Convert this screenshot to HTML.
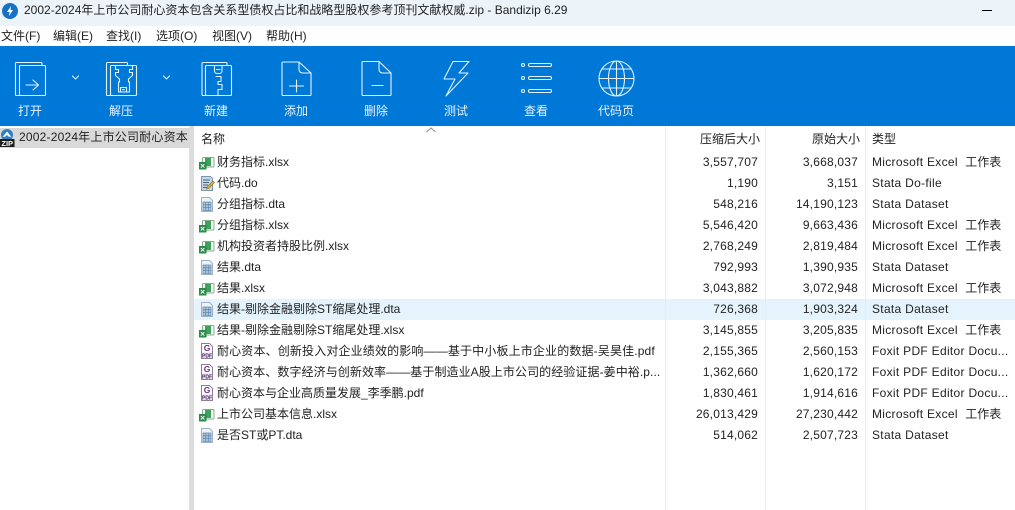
<!DOCTYPE html>
<html lang="zh"><head><meta charset="utf-8"><title>Bandizip</title>
<style>
html,body{margin:0;padding:0;width:1015px;height:510px;overflow:hidden;background:#fff}
body{font-family:"Liberation Sans","Noto Sans CJK SC",sans-serif;font-size:12px;color:#222;position:relative}
div{position:absolute;white-space:nowrap}
.t{line-height:20px;height:20px;margin-top:-1px}
.lbl{top:102px;width:60px;text-align:center;color:#e8f3fc;font-size:12px;line-height:18px}
.m{top:26px;line-height:20px;font-size:12px}
.r{text-align:right}
.n{text-align:right;width:100px;letter-spacing:.2px;line-height:20px;height:20px;margin-top:-1px}
.a{left:658px}.b{left:758px}
.y{left:872px;letter-spacing:.3px;line-height:20px;height:20px;margin-top:-1px}
.y span{letter-spacing:0;margin-left:4px}
.f{left:217px;line-height:20px;height:20px;margin-top:-1px}
svg{position:absolute;overflow:visible}
.ic{fill:none;stroke:#e4f2fc;stroke-width:1.1;stroke-linejoin:round;stroke-linecap:round}
</style></head><body>
<svg width="0" height="0" style="position:absolute"><defs>
<g id="x"><rect x="3.500" y="3.500" width="11.500" height="9.500" rx="1" fill="#f7faf7" stroke="#8aa893"/><rect x="6" y="4" width="6" height="8" fill="#3ca35a"/><rect x="0" y="8" width="7.500" height="7.500" fill="#2a8a47"/><path d="M1.800 10l3.600 3.600M5.400 10l-3.600 3.600" stroke="#fff" stroke-width=".9"/></g>
<g id="d"><path d="M2.500 1.500h8l3 3v11h-11z" fill="#eef3f8" stroke="#9db2c6"/><path d="M4 6h8v8.500H4zM4 8.800h8M4 11.600h8M6.700 6v8.500M9.300 6v8.500" fill="#b4cadf" stroke="#5f86ad" stroke-width=".8"/></g>
<g id="p"><path d="M2.500 .5h8l3 3v12h-11z" fill="#fff" stroke="#8d7f95"/><text x="8" y="8" font-size="8.500" text-anchor="middle" fill="#6f2f86" font-weight="bold" font-family="Liberation Sans">G</text><rect x="3" y="9.500" width="10" height="5.500" fill="#e7deec"/><text x="8" y="14.300" font-size="5" text-anchor="middle" fill="#4d2d60" font-weight="bold" font-family="Liberation Sans">PDF</text></g>
<g id="do"><path d="M2.500 1.500h9l2 2v12h-11z" fill="#c9d8e6" stroke="#7f95ab"/><path d="M4 5h7M4 7.500h6M4 10h5M4 12.500h4" stroke="#47637f"/><path d="M8 12l6-6 1.500 1.500-6 6-2 .5z" fill="#d9b23c" stroke="#8a6d1d" stroke-width=".6"/></g>
</defs></svg>

<!-- Title bar -->
<div style="left:0;top:0;width:1015px;height:26px;background:#ecf3f9"></div>
<svg style="left:2px;top:3px" width="16" height="16"><circle cx="8" cy="8" r="8" fill="#1672c4"/><path d="M9 3L5 9h2.500L7 13l4-6H8.500z" fill="#fff"/></svg>
<div class="t" style="left:24px;top:1px;font-size:12px">2002-2024年上市公司耐心资本包含关系型债权占比和战略型股权参考顶刊文献权威.zip - Bandizip 6.29</div>
<div style="left:982px;top:10px;width:10px;height:1px;background:#000"></div>

<!-- Menu -->
<div style="left:0;top:26px;width:1015px;height:20px;background:#fff"></div>
<div class="m" style="left:1px">文件(F)</div>
<div class="m" style="left:53px">编辑(E)</div>
<div class="m" style="left:106px">查找(I)</div>
<div class="m" style="left:156px">选项(O)</div>
<div class="m" style="left:212px">视图(V)</div>
<div class="m" style="left:266px">帮助(H)</div>

<!-- Toolbar -->
<div style="left:0;top:46px;width:1015px;height:80px;background:#0078d7"></div>
<svg class="ic" style="left:0;top:46px" width="1015" height="80">
 <!-- open -->
 <path d="M19 49.500h-2.500a1 1 0 0 1-1-1V17.500a1 1 0 0 1 1-1H41a1 1 0 0 1 1 1v2"/>
 <rect x="19.500" y="19.500" width="26" height="30" rx="1"/>
 <path d="M26 39h12.500M33 34l5.500 5-5.500 5"/>
 <path d="M72.500 30l3 3 3-3"/>
 <!-- extract -->
 <path d="M110 49.500h-2.500a1 1 0 0 1-1-1V17.500a1 1 0 0 1 1-1h19a1 1 0 0 1 1 1v2"/>
 <rect x="110.500" y="19.500" width="26" height="30" rx="1"/>
 <path d="M115.500 19.500v4h3v3h-3v3l4 3.500v3h-1v10h11v-10h-1v-3l4-3.500v-3h-3v-3h3v-4"/>
 <rect x="120.500" y="41.500" width="6" height="4.500"/><path d="M122.500 43.700h2"/>
 <path d="M163.500 30l3 3 3-3"/>
 <!-- new -->
 <path d="M205 49.500h-2a1 1 0 0 1-1-1V17.500a1 1 0 0 1 1-1h23a1 1 0 0 1 1 1v2"/>
 <rect x="205.500" y="19.500" width="26" height="30" rx="1"/>
 <path d="M214.500 19.500v6a3 3 0 0 0 3 2h1.500a3 3 0 0 0 3-2v-6M216.500 23.500h3.500"/>
 <path d="M216 30.500h5v5h-3v3h4v5h-4v6"/>
 <!-- add -->
 <path d="M299 16h-16a1 1 0 0 0-1 1V48.500a1 1 0 0 0 1 1h27a1 1 0 0 0 1-1V27zM299 16v7q0 4 4 4h8"/>
 <path d="M296.500 34v12M289.500 40h14"/>
 <!-- delete -->
 <path d="M379 15.500h-16a1 1 0 0 0-1 1V48.500a1 1 0 0 0 1 1h27a1 1 0 0 0 1-1V27zM379 15.500v7.500q0 4 4 4h8"/>
 <path d="M372 39.500h11"/>
 <!-- test -->
 <path d="M453 15.500h16l-10 11.500h9L446 50l9-17h-11z"/>
 <!-- view -->
 <circle cx="523" cy="19" r="1.500"/><circle cx="523" cy="32" r="1.500"/><circle cx="523" cy="45" r="1.500"/>
 <rect x="528.500" y="17.500" width="23" height="3" rx="1.500"/><rect x="528.500" y="30.500" width="23" height="3" rx="1.500"/><rect x="528.500" y="43.500" width="23" height="3" rx="1.500"/>
 <!-- globe -->
 <circle cx="616.500" cy="32.500" r="17.500"/><ellipse cx="616.500" cy="32.500" rx="8" ry="17.500"/>
 <path d="M616.500 15v35M599 32.500h35M602 23h29M602 42h29"/>
</svg>
<div class="lbl" style="left:0">打开</div>
<div class="lbl" style="left:91px">解压</div>
<div class="lbl" style="left:186px">新建</div>
<div class="lbl" style="left:266px">添加</div>
<div class="lbl" style="left:346px">删除</div>
<div class="lbl" style="left:426px">测试</div>
<div class="lbl" style="left:506px">查看</div>
<div class="lbl" style="left:586px">代码页</div>

<!-- Left tree -->
<div style="left:0;top:128px;width:189px;height:20px;background:#d9d9d9"></div>
<svg style="left:0;top:129px" width="16" height="20"><circle cx="7" cy="6" r="6" fill="#2b7fc6"/><path d="M2.500 8L7 2.500 11.500 8 8.500 7.500 7 6 5.500 7.500z" fill="#fff"/><rect x="0" y="10" width="14.500" height="8" fill="#1d1d1d"/><text x="7.200" y="17" font-size="7.500" font-weight="bold" text-anchor="middle" fill="#fff" font-family="Liberation Sans">ZIP</text></svg>
<div class="t" style="left:19px;top:128px;font-size:12px;letter-spacing:.2px">2002-2024年上市公司耐心资本</div>
<div style="left:189px;top:126px;width:5px;height:384px;background:#dcdcdc"></div>

<!-- Selected row -->
<div style="left:194px;top:299px;width:821px;height:21px;background:#e5f3fd"></div>

<!-- Column separators -->
<div style="left:665px;top:126px;width:1px;height:384px;background:#e8edf2"></div>
<div style="left:765px;top:126px;width:1px;height:384px;background:#e8edf2"></div>
<div style="left:865px;top:126px;width:1px;height:384px;background:#e8edf2"></div>

<!-- Header -->
<div class="t" style="left:201px;top:130px">名称</div>
<svg style="left:426px;top:127px" width="10" height="6"><path d="M.5 5L5 1l4.500 4" fill="none" stroke="#8c8c8c"/></svg>
<div class="t r" style="left:660px;width:100px;top:130px">压缩后大小</div>
<div class="t r" style="left:760px;width:100px;top:130px">原始大小</div>
<div class="t" style="left:872px;top:130px">类型</div>

<!-- Rows -->
<svg style="left:199px;top:154px" width="16" height="16"><use href="#x"/></svg>
<div class="f" style="top:153px">财务指标.xlsx</div><div class="n a" style="top:153px">3,557,707</div><div class="n b" style="top:153px">3,668,037</div><div class="y" style="top:153px">Microsoft Excel<span> 工作表</span></div>

<svg style="left:199px;top:175px" width="16" height="16"><use href="#do"/></svg>
<div class="f" style="top:174px">代码.do</div><div class="n a" style="top:174px">1,190</div><div class="n b" style="top:174px">3,151</div><div class="y" style="top:174px">Stata Do-file</div>

<svg style="left:199px;top:196px" width="16" height="16"><use href="#d"/></svg>
<div class="f" style="top:195px">分组指标.dta</div><div class="n a" style="top:195px">548,216</div><div class="n b" style="top:195px">14,190,123</div><div class="y" style="top:195px">Stata Dataset</div>

<svg style="left:199px;top:217px" width="16" height="16"><use href="#x"/></svg>
<div class="f" style="top:216px">分组指标.xlsx</div><div class="n a" style="top:216px">5,546,420</div><div class="n b" style="top:216px">9,663,436</div><div class="y" style="top:216px">Microsoft Excel<span> 工作表</span></div>

<svg style="left:199px;top:238px" width="16" height="16"><use href="#x"/></svg>
<div class="f" style="top:237px">机构投资者持股比例.xlsx</div><div class="n a" style="top:237px">2,768,249</div><div class="n b" style="top:237px">2,819,484</div><div class="y" style="top:237px">Microsoft Excel<span> 工作表</span></div>

<svg style="left:199px;top:259px" width="16" height="16"><use href="#d"/></svg>
<div class="f" style="top:258px">结果.dta</div><div class="n a" style="top:258px">792,993</div><div class="n b" style="top:258px">1,390,935</div><div class="y" style="top:258px">Stata Dataset</div>

<svg style="left:199px;top:280px" width="16" height="16"><use href="#x"/></svg>
<div class="f" style="top:279px">结果.xlsx</div><div class="n a" style="top:279px">3,043,882</div><div class="n b" style="top:279px">3,072,948</div><div class="y" style="top:279px">Microsoft Excel<span> 工作表</span></div>

<svg style="left:199px;top:301px" width="16" height="16"><use href="#d"/></svg>
<div class="f" style="top:300px">结果-剔除金融剔除ST缩尾处理.dta</div><div class="n a" style="top:300px">726,368</div><div class="n b" style="top:300px">1,903,324</div><div class="y" style="top:300px">Stata Dataset</div>

<svg style="left:199px;top:322px" width="16" height="16"><use href="#x"/></svg>
<div class="f" style="top:321px">结果-剔除金融剔除ST缩尾处理.xlsx</div><div class="n a" style="top:321px">3,145,855</div><div class="n b" style="top:321px">3,205,835</div><div class="y" style="top:321px">Microsoft Excel<span> 工作表</span></div>

<svg style="left:199px;top:343px" width="16" height="16"><use href="#p"/></svg>
<div class="f" style="top:342px;letter-spacing:.15px">耐心资本、创新投入对企业绩效的影响——基于中小板上市企业的数据-吴昊佳.pdf</div><div class="n a" style="top:342px">2,155,365</div><div class="n b" style="top:342px">2,560,153</div><div class="y" style="top:342px">Foxit PDF Editor Docu...</div>

<svg style="left:199px;top:364px" width="16" height="16"><use href="#p"/></svg>
<div class="f" style="top:363px;letter-spacing:.08px">耐心资本、数字经济与创新效率——基于制造业A股上市公司的经验证据-姜中裕.p...</div><div class="n a" style="top:363px">1,362,660</div><div class="n b" style="top:363px">1,620,172</div><div class="y" style="top:363px">Foxit PDF Editor Docu...</div>

<svg style="left:199px;top:385px" width="16" height="16"><use href="#p"/></svg>
<div class="f" style="top:384px">耐心资本与企业高质量发展_李季鹏.pdf</div><div class="n a" style="top:384px">1,830,461</div><div class="n b" style="top:384px">1,914,616</div><div class="y" style="top:384px">Foxit PDF Editor Docu...</div>

<svg style="left:199px;top:406px" width="16" height="16"><use href="#x"/></svg>
<div class="f" style="top:405px">上市公司基本信息.xlsx</div><div class="n a" style="top:405px">26,013,429</div><div class="n b" style="top:405px">27,230,442</div><div class="y" style="top:405px">Microsoft Excel<span> 工作表</span></div>

<svg style="left:199px;top:427px" width="16" height="16"><use href="#d"/></svg>
<div class="f" style="top:426px">是否ST或PT.dta</div><div class="n a" style="top:426px">514,062</div><div class="n b" style="top:426px">2,507,723</div><div class="y" style="top:426px">Stata Dataset</div>
</body></html>
